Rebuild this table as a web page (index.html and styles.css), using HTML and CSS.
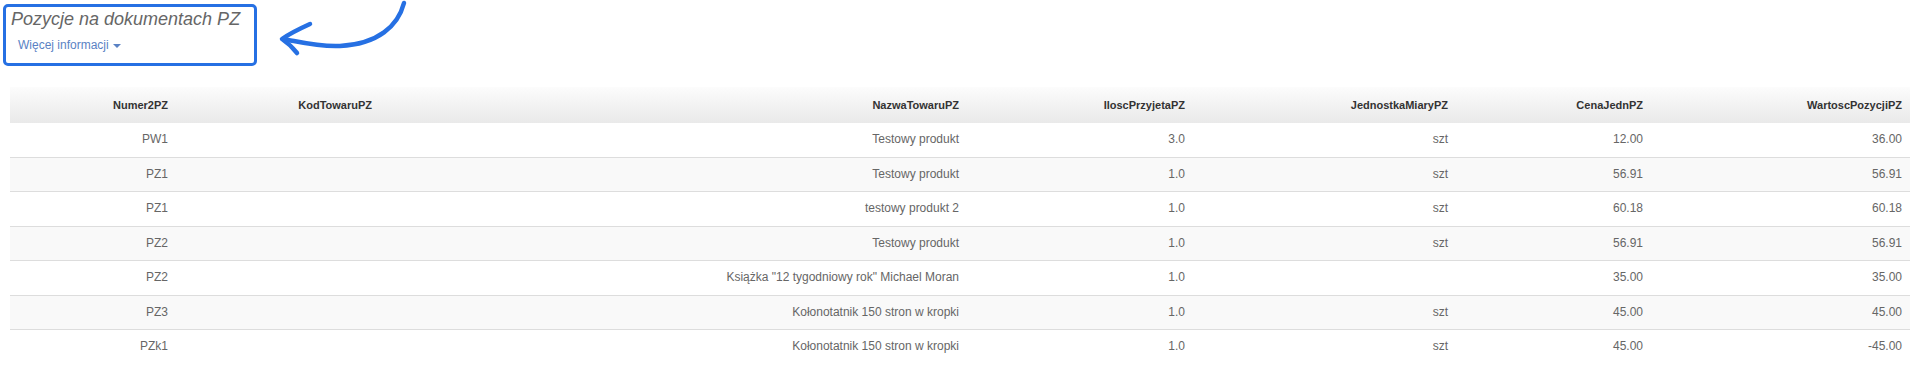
FILE: index.html
```html
<!DOCTYPE html>
<html lang="pl">
<head>
<meta charset="utf-8">
<title>Pozycje na dokumentach PZ</title>
<link rel="stylesheet" href="styles.css">
</head>
<body>
<div class="page">
  <div class="title-block">
    <h3 class="title">Pozycje na dokumentach PZ</h3>
    <div class="more"><a class="more-link" href="#">Więcej informacji <span class="caret"></span></a></div>
    <div class="highlight"></div>
    <svg class="arrow" width="140" height="60" viewBox="270 0 140 60" fill="none" stroke="#2670e3" stroke-linecap="round" stroke-linejoin="round">
      <path d="M404,3 C398,26 378,44 340,46 C318,47 300,42 283,39" stroke-width="4.5"/>
      <path d="M310,24 C299,29 289,34 282,39 C288,43 293,48 297,53" stroke-width="4.5"/>
    </svg>
  </div>

  <table class="grid">
    <colgroup>
      <col class="c1"><col class="c2"><col class="c3"><col class="c4"><col class="c5"><col class="c6"><col class="c7">
    </colgroup>
    <thead>
      <tr>
        <th>Numer2PZ</th>
        <th>KodTowaruPZ</th>
        <th>NazwaTowaruPZ</th>
        <th>IloscPrzyjetaPZ</th>
        <th>JednostkaMiaryPZ</th>
        <th>CenaJednPZ</th>
        <th>WartoscPozycjiPZ</th>
      </tr>
    </thead>
    <tbody>
      <tr><td>PW1</td><td></td><td>Testowy produkt</td><td>3.0</td><td>szt</td><td>12.00</td><td>36.00</td></tr>
      <tr><td>PZ1</td><td></td><td>Testowy produkt</td><td>1.0</td><td>szt</td><td>56.91</td><td>56.91</td></tr>
      <tr><td>PZ1</td><td></td><td>testowy produkt 2</td><td>1.0</td><td>szt</td><td>60.18</td><td>60.18</td></tr>
      <tr><td>PZ2</td><td></td><td>Testowy produkt</td><td>1.0</td><td>szt</td><td>56.91</td><td>56.91</td></tr>
      <tr><td>PZ2</td><td></td><td>Książka "12 tygodniowy rok" Michael Moran</td><td>1.0</td><td></td><td>35.00</td><td>35.00</td></tr>
      <tr><td>PZ3</td><td></td><td>Kołonotatnik 150 stron w kropki</td><td>1.0</td><td>szt</td><td>45.00</td><td>45.00</td></tr>
      <tr><td>PZk1</td><td></td><td>Kołonotatnik 150 stron w kropki</td><td>1.0</td><td>szt</td><td>45.00</td><td>-45.00</td></tr>
    </tbody>
  </table>
</div>
</body>
</html>
```

FILE: styles.css
```css
html, body {
  margin: 0;
  padding: 0;
  background: #fff;
}

body {
  font-family: "Liberation Sans", Arial, sans-serif;
  color: #333;
}

.page {
  padding: 0 10px;
}

.title-block {
  position: relative;
  padding: 9px 0 0 1px;
  height: 78px;
}

.title {
  margin: 0;
  font-size: 18px;
  line-height: 20px;
  font-weight: normal;
  font-style: italic;
  color: #666;
}

.more {
  margin-top: 8px;
  padding-left: 7px;
  font-size: 12px;
  line-height: 17px;
}

.more-link {
  color: #5a82c4;
  text-decoration: none;
}

.caret {
  display: inline-block;
  width: 0;
  height: 0;
  margin-left: 1px;
  vertical-align: middle;
  border-top: 4px solid #5a82c4;
  border-left: 4px solid transparent;
  border-right: 4px solid transparent;
}

.highlight {
  position: absolute;
  left: -7px;
  top: 4px;
  width: 248px;
  height: 56px;
  border: 3px solid #2670e3;
  border-radius: 5px;
}

.arrow {
  position: absolute;
  left: 260px;
  top: 0;
}

.grid {
  width: 100%;
  table-layout: fixed;
  border-collapse: collapse;
  font-size: 12px;
}

.c1 { width: 166px; }
.c2 { width: 204px; }
.c3 { width: 587px; }
.c4 { width: 226px; }
.c5 { width: 263px; }
.c6 { width: 195px; }
.c7 { width: 259px; }

.grid th {
  padding: 8px;
  height: 20px;
  font-size: 11px;
  line-height: 20px;
  font-weight: bold;
  color: #333;
  text-align: right;
  background: linear-gradient(to bottom, #fcfcfc 0%, #e9e9e9 100%);
}

.grid td {
  padding: 8px;
  line-height: 17.5px;
  color: #666;
  text-align: right;
  white-space: nowrap;
}

.grid tbody tr + tr td {
  border-top: 1px solid #ddd;
}

.grid tbody tr:nth-child(even) td {
  background: #f9f9f9;
}
```
